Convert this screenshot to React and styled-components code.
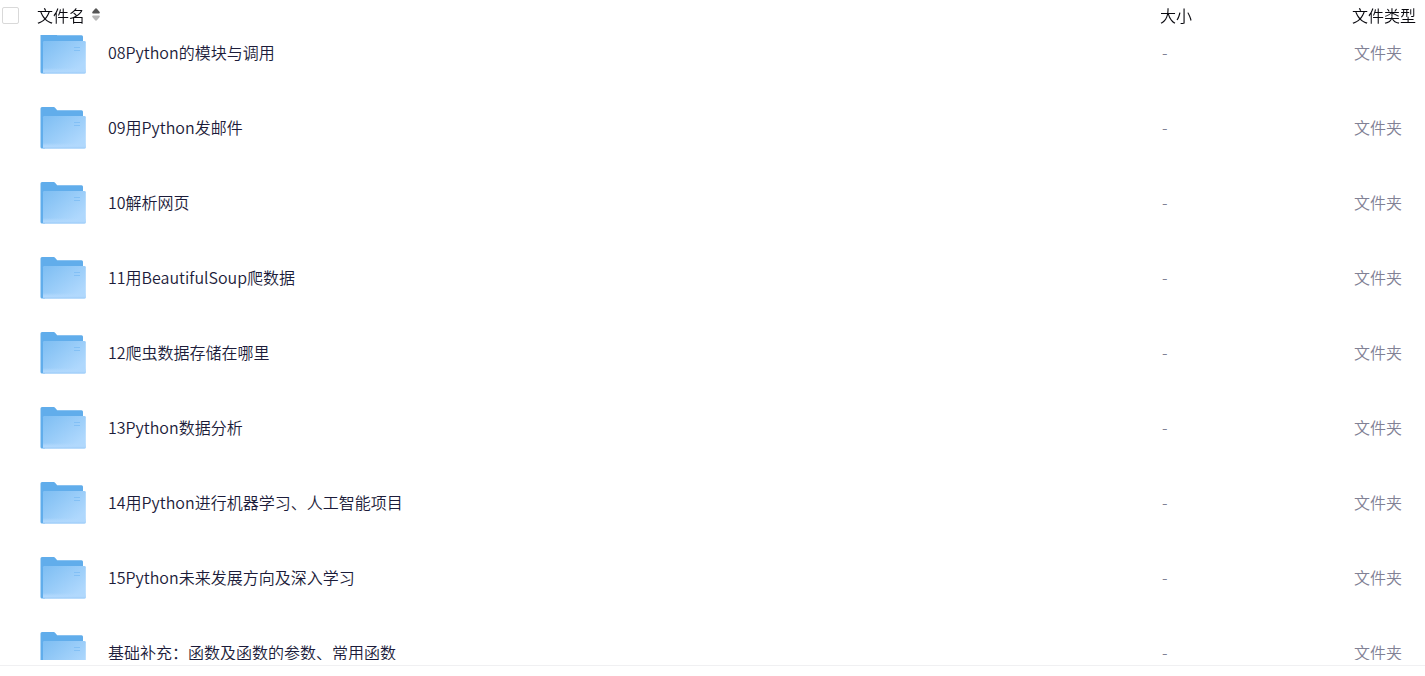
import React, { useLayoutEffect, useRef } from 'react';
import styled, { createGlobalStyle } from 'styled-components';

const GlobalStyle = createGlobalStyle`
  * { box-sizing: border-box; }
  body {
    margin: 0;
    background: #fff;
    font-family: "Noto Sans CJK SC", "Noto Sans", sans-serif;
    font-size: 16px;
    font-weight: 350;
    line-height: 24px;
  }
`;

const Page = styled.main`
  display: flex;
  flex-direction: column;
  height: 100vh;
`;

const ListPane = styled.div`
  flex: 1;
  min-height: 0;
  overflow-y: auto;
  scrollbar-width: none;
`;

const Footer = styled.footer`
  flex: none;
  height: 16px;
  padding-top: 5px;
`;

const Divider = styled.hr`
  margin: 0;
  border: 0;
  border-top: 1px solid #f0f0f2;
`;

const FileTable = styled.table`
  width: 100%;
  table-layout: fixed;
  border-collapse: collapse;
`;

const Column = styled.col`
  width: ${({ $width }) => ($width ? `${$width}px` : 'auto')};
`;

const Head = styled.thead`
  position: sticky;
  top: 0;
  z-index: 1;
  background: #fff;
`;

const HeadCell = styled.th`
  height: 35px;
  padding: 3px 0 8px;
  color: #08080e;
  font-weight: inherit;
  text-align: left;
  white-space: nowrap;
`;

const Checkbox = styled.input`
  appearance: none;
  display: block;
  width: 17px;
  height: 17px;
  margin: 0 0 0 2px;
  border: 1px solid #d9d9d9;
  border-radius: 2px;
  background: #fff;
`;

const SortButton = styled.button`
  display: flex;
  align-items: center;
  gap: 7px;
  padding: 0;
  border: 0;
  background: none;
  color: inherit;
  font: inherit;
  cursor: pointer;
`;

const Row = styled.tr`
  height: 75px;
  line-height: 16px;
`;

const NameCell = styled.td`
  padding: 0 0 0 3px;
  color: #1c1c3a;
`;

const FileLink = styled.a`
  display: flex;
  align-items: center;
  gap: 22px;
  color: inherit;
  text-decoration: none;
`;

const FileName = styled.span`
  padding-bottom: 2px;
`;

const MetaCell = styled.td`
  padding: 0 0 2px 2px;
  color: #818195;
  white-space: nowrap;
`;

const SortIcon = () => (
  <svg width="8" height="14" viewBox="0 0 8 14" aria-hidden="true">
    <path d="M4 0.3 Q4.6 0.5 5.1 1.1 L7.5 3.8 Q8.3 5.3 7 5.6 H1 Q-0.3 5.3 0.5 3.8 L2.9 1.1 Q3.4 0.5 4 0.3Z" fill="#555" />
    <path d="M4 12.7 Q4.6 12.5 5.1 11.9 L7.5 9.2 Q8.3 7.7 7 7.4 H1 Q-0.3 7.7 0.5 9.2 L2.9 11.9 Q3.4 12.5 4 12.7Z" fill="#b7b7b7" />
  </svg>
);

const FolderIcon = () => (
  <svg width="46" height="42" viewBox="0 0 46 42" aria-hidden="true">
    <path d="M0.5 1.5 Q0.5 0 2 0 H13.5 Q14.6 0 15.3 0.9 L17.2 3.2 H41.5 Q43 3.2 43 4.7 V12 H5 V41.5 H2 Q0.5 41.5 0.5 40Z" fill="#61adeb" />
    <path d="M3 10.2 Q3 9 4.2 9 H44.5 Q45.8 9 45.8 10.3 V40 Q45.8 41.5 44.3 41.5 H3Z" fill="url(#folder-front)" />
    <path d="M3 36 H45.8 V40 Q45.8 41.5 44.3 41.5 H3Z" fill="url(#folder-base)" />
    <path d="M34 15.5 H40 M34 18.5 H40" stroke="#83c0f5" strokeWidth="1" />
  </svg>
);

const FolderPaints = () => (
  <svg width="0" height="0" aria-hidden="true">
    <defs>
      <linearGradient id="folder-front" x1="0" y1="0.1" x2="0.8" y2="0.85">
        <stop offset="0" stopColor="#80bff3" />
        <stop offset="1" stopColor="#afd8fd" />
      </linearGradient>
      <linearGradient id="folder-base" x1="0" y1="0" x2="0" y2="1">
        <stop offset="0" stopColor="#b2d9fd" stopOpacity="0" />
        <stop offset="0.6" stopColor="#b2d9fd" />
        <stop offset="1" stopColor="#9dccf8" />
      </linearGradient>
    </defs>
  </svg>
);

const folders = [
  '08Python的模块与调用',
  '09用Python发邮件',
  '10解析网页',
  '11用BeautifulSoup爬数据',
  '12爬虫数据存储在哪里',
  '13Python数据分析',
  '14用Python进行机器学习、人工智能项目',
  '15Python未来发展方向及深入学习',
  '基础补充：函数及函数的参数、常用函数',
];

const INITIAL_SCROLL = 20;

export default function App() {
  const pane = useRef(null);

  useLayoutEffect(() => {
    pane.current.scrollTop = INITIAL_SCROLL;
  }, []);

  return (
    <Page>
      <GlobalStyle />
      <ListPane ref={pane}>
        <FileTable>
          <colgroup>
            <Column $width={37} />
            <Column />
            <Column $width={192} />
            <Column $width={73} />
          </colgroup>
          <Head>
            <tr>
              <HeadCell><Checkbox type="checkbox" aria-label="全选" /></HeadCell>
              <HeadCell scope="col">
                <SortButton type="button">文件名<SortIcon /></SortButton>
              </HeadCell>
              <HeadCell scope="col">大小</HeadCell>
              <HeadCell scope="col">文件类型</HeadCell>
            </tr>
          </Head>
          <tbody>
            {folders.map((name) => (
              <Row key={name}>
                <td />
                <NameCell>
                  <FileLink href="#"><FolderIcon /><FileName>{name}</FileName></FileLink>
                </NameCell>
                <MetaCell>-</MetaCell>
                <MetaCell>文件夹</MetaCell>
              </Row>
            ))}
          </tbody>
        </FileTable>
      </ListPane>
      <Footer>
        <Divider />
        <FolderPaints />
      </Footer>
    </Page>
  );
}
